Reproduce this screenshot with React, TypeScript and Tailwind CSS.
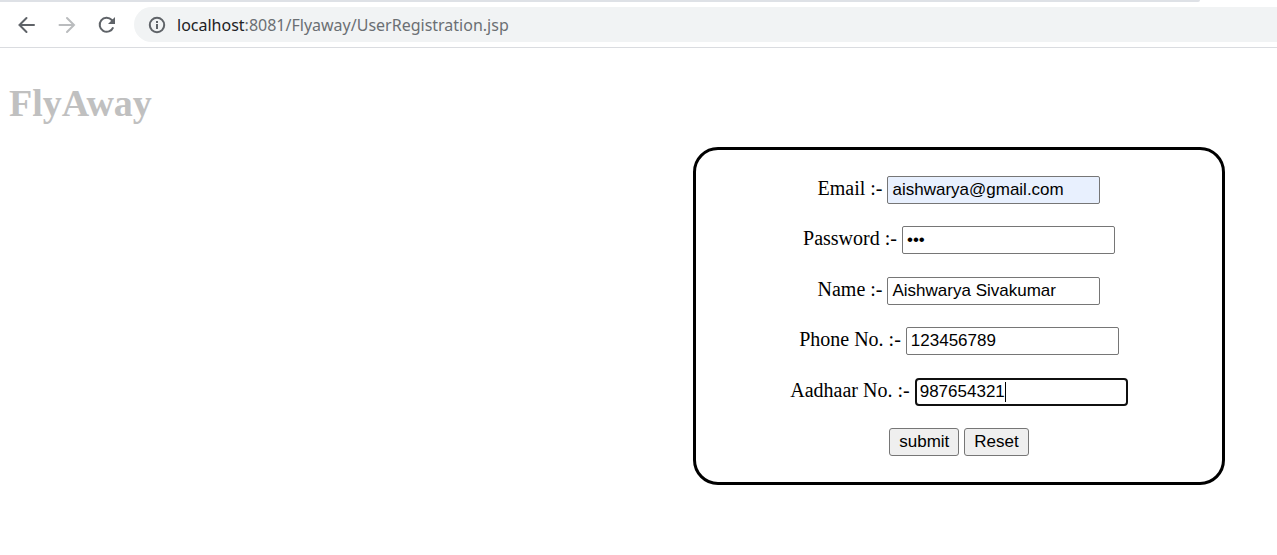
import { useState } from "react";

function BackIcon() {
  return (
    <svg viewBox="0 0 20 20" className="size-5" fill="none" stroke="#5f6368" strokeWidth="2" strokeLinecap="round" aria-hidden="true">
      <path d="M17 10H2.5M9.5 3l-7 7 7 7" />
    </svg>
  );
}

function ForwardIcon() {
  return (
    <svg viewBox="0 0 20 20" className="size-5" fill="none" stroke="#babcbe" strokeWidth="2" strokeLinecap="round" aria-hidden="true">
      <path d="M2.5 10H17M10 3l7 7-7 7" />
    </svg>
  );
}

function ReloadIcon() {
  return (
    <svg viewBox="0 0 20 20" className="size-5" aria-hidden="true">
      <path d="M16.2 12.4A7 7 0 1 1 14.8 5L16 6.4" fill="none" stroke="#5f6368" strokeWidth="2" />
      <path d="M18 2v7h-7z" fill="#5f6368" />
    </svg>
  );
}

function InfoIcon() {
  return (
    <svg viewBox="0 0 18 18" className="size-[18px]" aria-hidden="true">
      <circle cx="9" cy="9" r="7.2" fill="none" stroke="#5f6368" strokeWidth="2" />
      <path d="M8 8h2v5H8zM8 5h2v2H8z" fill="#5f6368" />
    </svg>
  );
}

function BrowserBar() {
  return (
    <header className="border-b border-[#dadce0] bg-white">
      <div className="mr-[77px] h-0.5 rounded-br bg-[#dee1e6]" />
      <div className="flex items-center pt-[5px] pb-[5px] pl-[17px]">
        <nav className="mr-[17px] flex gap-5">
          <button type="button" aria-label="Back"><BackIcon /></button>
          <button type="button" aria-label="Forward" disabled><ForwardIcon /></button>
          <button type="button" aria-label="Reload"><ReloadIcon /></button>
        </nav>
        <div className="flex h-[35px] flex-1 items-center gap-[11px] rounded-l-full bg-[#f1f3f4] pl-3.5">
          <button type="button" aria-label="View site information"><InfoIcon /></button>
          <p className="font-['Noto_Sans',sans-serif] text-[16px] leading-6 whitespace-nowrap text-[#6b6f73]">
            <span className="text-[#202124]">localhost</span>:8081/Flyaway/UserRegistration.jsp
          </p>
        </div>
      </div>
    </header>
  );
}

const fields = [
  { id: "email", label: "Email", type: "email", value: "aishwarya@gmail.com" },
  { id: "password", label: "Password", type: "password", value: "abc" },
  { id: "name", label: "Name", type: "text", value: "Aishwarya Sivakumar" },
  { id: "phone", label: "Phone No.", type: "text", value: "123456789" },
  { id: "aadhaar", label: "Aadhaar No.", type: "text", value: "987654321" },
];

function Field({ id, label, type, value }: (typeof fields)[number]) {
  const [text, setText] = useState(value);
  const active = id === "aadhaar";
  return (
    <div className="flex h-7 items-baseline justify-center gap-[5px]">
      <label htmlFor={id} className="text-xl leading-6 whitespace-nowrap">{label} :-</label>
      <span className="relative">
        <input
          id={id}
          name={id}
          type={type}
          value={text}
          autoFocus={active}
          autoComplete="off"
          onChange={(e) => setText(e.target.value)}
          className={`h-7 w-[213px] rounded-xs border border-[#767676] px-1 font-['Liberation_Sans',sans-serif] text-[17px] leading-6 outline-none focus:rounded-sm focus:border-2 focus:border-[#101010] focus:px-[3px] ${
            id === "email" ? "bg-[#e8f0fe]" : "bg-white"
          } ${active ? "caret-transparent" : ""}`}
        />
        {active && text === value && (
          <span className="absolute top-1 left-[90px] h-5 w-px bg-black" aria-hidden="true" />
        )}
      </span>
    </div>
  );
}

const buttonStyle =
  "h-7 rounded-[3px] border border-[#767676] bg-[#efefef] px-[9px] font-['Liberation_Sans',sans-serif] text-[17px] leading-6";

export default function App() {
  return (
    <div className="min-h-screen bg-white font-['Liberation_Serif',serif] text-black">
      <BrowserBar />
      <main className="px-[9px] pt-8">
        <h1 className="text-[38px] leading-[46px] font-bold text-[#c0c0c0]">FlyAway</h1>
        <form
          onSubmit={(e) => e.preventDefault()}
          className="mt-[21px] mr-[43px] ml-auto flex min-h-[338px] w-[532px] max-w-full flex-col justify-between rounded-[25px] border-3 border-black px-4 pt-[26px] pb-[26px]"
        >
          {fields.map((field) => (
            <Field key={field.id} {...field} />
          ))}
          <div className="flex justify-center gap-[5px]">
            <button type="submit" className={buttonStyle}>submit</button>
            <button type="reset" className={buttonStyle}>Reset</button>
          </div>
        </form>
      </main>
    </div>
  );
}
